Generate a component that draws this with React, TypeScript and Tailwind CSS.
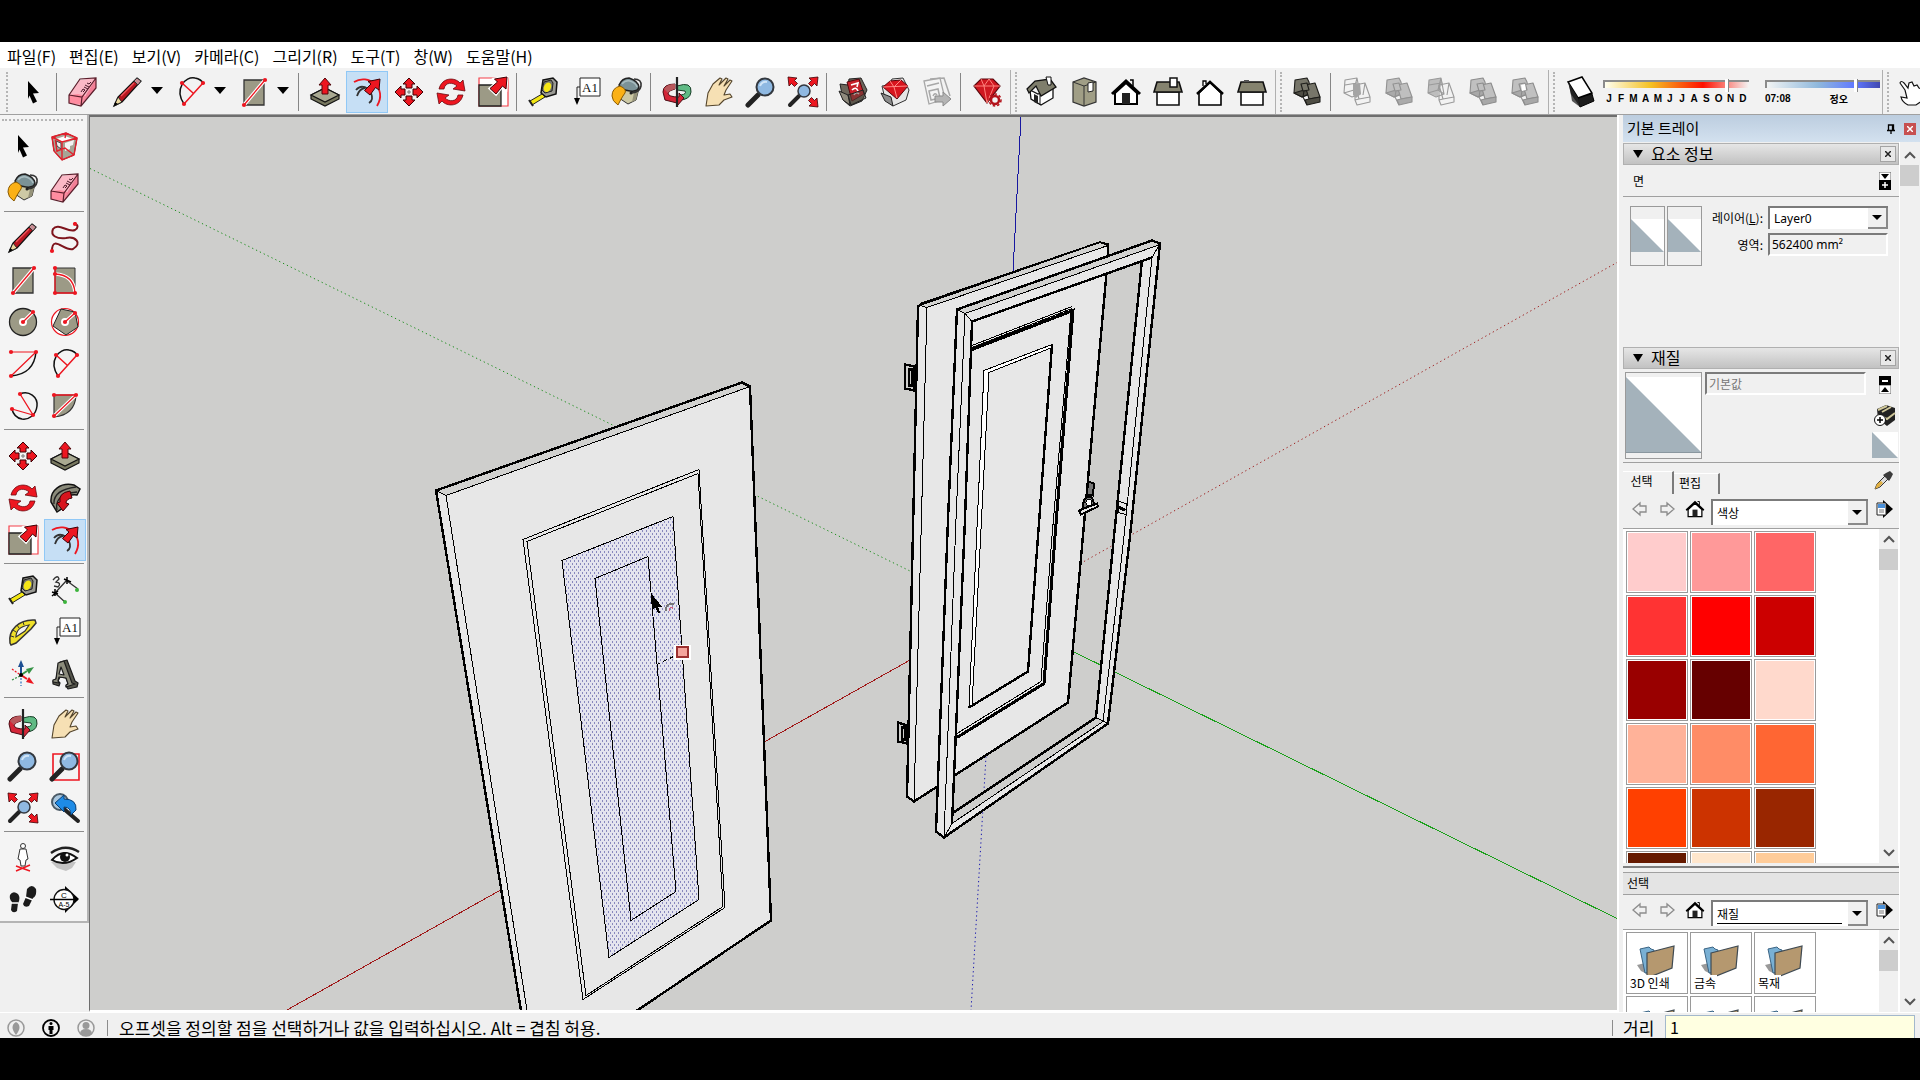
import type { ReactNode } from "react";

const RED = "#ed1620";
const STONE = "#9c9a86";

function Dots({ at }: { at: number[][] }) {
  return (
    <>
      {at.map(([x, y]) => (
        <circle key={`${x}-${y}`} cx={x} cy={y} r="2.1" fill={RED} />
      ))}
    </>
  );
}

const quarterTurns = [0, 90, 180, 270];
const bigArrow = "30,1 29,13 25.5,10 19,18 13,12.500 20.500,6 17.500,3";

const solidBoxes = (fill: string, side: string, stroke: string) => (
  <g fill={fill} stroke={stroke} strokeWidth="1.1" strokeLinejoin="round">
    <path d="M4 4l12-2 2 4 2 12-9 3-8-4z" />
    <path d="M3 17l10-3 7 3-9 4z" fill={side} />
    <path d="M14 9l10-2 5 14-11 2z" />
    <path d="M18 23l11-2v5l-13 3-2-5z" fill={side} />
    <path d="M14 9l-2 12 4 8" fill="none" />
    <path d="M10 8l6-1 2 7-6 1z" />
  </g>
);

const wireBoxes = (
  <g fill="none" stroke="#9a9a9a" strokeWidth="1.1" strokeLinejoin="round">
    <path d="M4 4l12-2 3 16-8 3-8-4zM3 17l10-3 6 4M13 14l3-12M4 9l12-2" />
    <path d="M14 9l10-2 5 14-11 2zM18 23l-4 1 2 5 13-3v-5M14 9v15M24 7l-2 12" />
  </g>
);

const houseIcon = (
  <g strokeLinejoin="miter">
    <path d="M5 17v11h22V17L16 7z" fill="#fff" stroke="#000" strokeWidth="2" />
    <path d="M2 18L16 5l14 13" fill="none" stroke="#000" strokeWidth="3" />
    <path d="M12 17h8v11h-8z" fill="#222" />
    <path d="M20 4h3v6" fill="none" stroke="#000" strokeWidth="1.5" />
  </g>
);

const lens = (
  <>
    <path d="M3 29l10-10" stroke="#222" strokeWidth="5" strokeLinecap="round" />
    <circle cx="20" cy="11" r="8.500" fill="#8fb9e2" stroke="#33383f" strokeWidth="2" />
    <path d="M15 10q2-5 7-4" fill="none" stroke="#cfe4f7" strokeWidth="2" />
  </>
);

const icons: Record<string, ReactNode> = {
  select: <path d="M11 5l11 12-6 .500 4 8-4 2-3.500-8L11 23z" fill="#000" />,
  component: (
    <>
      <path d="M3 7l14-4 11 5-3 17-12 5-8-9z" fill="#a5a596" stroke="#333" />
      <path d="M7 9l9-3 8 3-10 3z" fill="#fff" />
      <path d="M7 11l5 2v6l-4-3z" fill="#eee" stroke="#444" />
      <path d="M16 13l9-3-1 5-3 1v3l-5 2z" fill="#f4f4f4" />
      <path d="M3 7l14-4 11 5-3 17-12 5-8-9zM3 7l10 5 15-4M13 12v18M6 7l2 15M17 3l-1 5M8 21l8-3 9 7" fill="none" stroke="#e3202c" strokeWidth="1.400" />
    </>
  ),
  paint: (
    <>
      <path d="M13 11l15 1-3 12-8 4-9-6z" fill="#cdc9a5" stroke="#333" />
      <path d="M24 12l4 0-3 12-4 2z" fill="#96937a" />
      <path d="M8 9q3-7 10-7 9 3 10 9-1 5-9 4-9-1-11-6z" fill="#7b9297" stroke="#222" strokeWidth="1.500" />
      <path d="M11 8q3-4 8-3 6 2 7 6" fill="none" stroke="#a9bcc0" strokeWidth="1.500" />
      <path d="M23 3q8 0 7 7-1 6-9 7" fill="none" stroke="#333" strokeWidth="1.600" />
      <path d="M9 10q7 3 5 7c-3 4-5 8-7 12q-6-4-6-9 0-8 8-10z" fill="#fbb116" stroke="#8a5a00" />
      <circle cx="20" cy="17" r="1.500" fill="#222" />
    </>
  ),
  eraser: (
    <>
      <path d="M2 19l9-3 8 4-5 9-12-2z" fill="#ff8ca0" />
      <path d="M2 19L13 4l16-2-10 18-8-2z" fill="#fbb8c6" />
      <path d="M14 29l5-10L29 2v10z" fill="#f27f96" />
      <path d="M2 19L13 3l16-1v10L14 30 2 27zM2 19l13 2L29 2M15 21l-1 9" fill="none" stroke="#5a1d2a" strokeWidth="1.200" />
      <path d="M14 16l2-3 2 1-2 2M17 11l4 2M18 9l4 2M20 7l2 1 2-2" fill="none" stroke="#4a1a2a" strokeWidth="1" />
    </>
  ),
  pencil: (
    <>
      <path d="M2 30l4-9L25 2l4 3-19 21z" fill="#b81620" stroke="#111" strokeWidth="1.200" />
      <path d="M2 30l4-9 4 5z" fill="#ecd9a0" stroke="#222" />
      <path d="M2 30l1-4 3 2z" fill="#000" />
      <path d="M25 2l4 3-3 4-4-4z" fill="#c78e94" stroke="#333" />
      <path d="M9 20L22 7" stroke="#f0565c" strokeWidth="1.300" />
    </>
  ),
  freehand: (
    <>
      <path d="M3 29C3 12 16 30 24 27c10-6 2-13-7-11C8 17 1 14 4 7c5-7 15 4 22 1q5-3 0-7" fill="none" stroke="#7e141c" strokeWidth="2" />
      <Dots at={[[3, 29], [26, 2]]} />
    </>
  ),
  rect: (
    <>
      <path d="M6 4h20v25H6z" fill={STONE} stroke="#333" strokeWidth="1.300" />
      <path d="M6 29L27 4" stroke="#fff" strokeWidth="3.500" />
      <path d="M6 29L27 4" stroke={RED} strokeWidth="1.300" />
      <Dots at={[[6, 29], [27, 4]]} />
    </>
  ),
  rotRect: (
    <>
      <path d="M6 4h20v25H6z" fill={STONE} stroke="#333" />
      <path d="M6 10q19 1 20 19" fill="none" stroke="#fff" strokeWidth="3.500" />
      <path d="M6 4v25h20q-1-18-20-19" fill="none" stroke={RED} strokeWidth="1.300" />
      <Dots at={[[6, 4], [6, 10], [6, 29], [26, 29]]} />
    </>
  ),
  circle: (
    <>
      <circle cx="16" cy="16" r="13.500" fill={STONE} stroke="#222" strokeWidth="1.300" />
      <circle cx="16" cy="16" r="4" fill="#fff" />
      <path d="M16 16l10-10" stroke="#fff" strokeWidth="3.500" />
      <path d="M16 16l10-10" stroke={RED} strokeWidth="1.300" />
      <Dots at={[[16, 16], [26, 6]]} />
    </>
  ),
  polygon: (
    <>
      <circle cx="16" cy="16" r="13.500" fill="#fff" stroke={RED} strokeWidth="1.200" />
      <path d="M12 3l14 3 3 15-12 8-13-9z" fill={STONE} stroke="#222" />
      <circle cx="16" cy="16" r="4" fill="#fff" />
      <path d="M16 16l10-9" stroke="#fff" strokeWidth="3.500" />
      <path d="M16 16l10-9" stroke={RED} strokeWidth="1.300" />
      <Dots at={[[16, 16], [26, 7]]} />
    </>
  ),
  arc: (
    <>
      <path d="M4 28Q27 26 29 4" fill="none" stroke="#111" strokeWidth="1.500" />
      <path d="M4 4h25L4 28" fill="none" stroke={RED} strokeWidth="1.200" />
      <Dots at={[[4, 4], [29, 4], [4, 28]]} />
    </>
  ),
  arc2: (
    <>
      <path d="M9 28C-1 13 10 0 20 2q6 1 9 6" fill="none" stroke="#111" strokeWidth="1.500" />
      <path d="M9 28L28 7M7 7l11 10" stroke={RED} strokeWidth="1.500" />
      <Dots at={[[9, 28], [28, 7], [7, 7]]} />
    </>
  ),
  arc3: (
    <>
      <path d="M13 4C22 0 31 7 30 16 29 25 22 30 15 29 10 28 6 24 5 19" fill="none" stroke="#111" strokeWidth="1.500" />
      <path d="M13 4l13 21L5 19" fill="none" stroke={RED} strokeWidth="1.300" />
      <Dots at={[[13, 4], [26, 25], [5, 19]]} />
    </>
  ),
  pie: (
    <>
      <path d="M5 5h22q-1 20-22 22z" fill={STONE} stroke="#333" strokeWidth="1.200" />
      <path d="M5 26L27 5" stroke="#fff" strokeWidth="3.500" />
      <path d="M5 5h22L5 26" fill="none" stroke={RED} strokeWidth="1.300" />
      <Dots at={[[5, 5], [27, 5], [5, 26]]} />
    </>
  ),
  move: (
    <>
      {quarterTurns.map((a) => (
        <path key={a} d="M16 2l6 6h-3v4h-6V8h-3z" transform={`rotate(${a} 16 16)`} fill={RED} stroke="#3c0004" />
      ))}
      <path d="M14 16h4M16 14v4" stroke="#777" />
    </>
  ),
  pushpull: (
    <>
      <path d="M2 19l14-7 14 7v4l-14 7-14-7z" fill="#77775f" stroke="#111" strokeWidth="1.200" />
      <path d="M2 19l14-7 14 7-14 7z" fill="#a9a992" stroke="#111" strokeWidth="1.200" />
      <path d="M16 2l6 7h-3v9h-6V9h-3z" fill={RED} stroke="#50060a" />
    </>
  ),
  rotate: (
    <g fill={RED} stroke="#6a0a10" strokeWidth=".800">
      <path d="M4 13C7 1 20 1 25 7l3-3 2 11-12-2 4-3C18 6 10 6 9 13z" />
      <path d="M28 19C25 31 12 31 7 25l-3 3-2-11 12 2-4 3c4 4 12 4 13-3z" />
    </g>
  ),
  followMe: (
    <>
      <path d="M25 3C12 0 1 8 2 20l6 10 6-4q-2-5 1-9 5-5 13-4l3-6z" fill="#8a8a7a" stroke="#111" strokeWidth="1.500" />
      <path d="M5 22Q4 8 27 5M8 28q-3-16 20-18" fill="none" stroke="#222" strokeWidth="1.300" />
      <path d="M21 9q-12 2-10 11l-3 1 6 8 6-7-3-1q0-4 6-5z" fill="#d8141d" stroke="#3c0004" />
    </>
  ),
  scale: (
    <>
      <path d="M2 2h29v28H2z" fill="#fff" stroke="#f3404a" strokeWidth="1.200" />
      <path d="M2 9h22v21H2z" fill={STONE} stroke="#222" strokeWidth="1.300" />
      <polygon points={bigArrow} fill={RED} stroke="#fff" strokeWidth="3" />
      <polygon points={bigArrow} fill={RED} stroke="#3c0004" />
    </>
  ),
  offset: (
    <>
      <path d="M3 6C17-3 37 12 26 30" fill="none" stroke={RED} strokeWidth="1.800" />
      <path d="M5 14q5-6 12-1M14 12q-6 1-8 8M20 17q3 7-2 10" fill="none" stroke="#333" strokeWidth="1.800" />
      <polygon points="29,3 28,14 24.500,11.500 19,19 13.500,14.500 20,8 17,5.500" fill={RED} stroke="#3c0004" />
    </>
  ),
  tape: (
    <>
      <path d="M16 4l10-2 4 4-1 12-10 3-5-4z" fill="#9a9a94" stroke="#111" strokeWidth="1.500" />
      <path d="M17 6l7-2 2 3-1 8-7 2-3-3z" fill="#77776f" stroke="#222" />
      <ellipse cx="20.500" cy="11" rx="3.500" ry="5" fill="#f5e616" transform="rotate(25 20 11)" />
      <path d="M15 18L3 25l2 4 13-8z" fill="#f2e613" stroke="#222" />
      <path d="M2 24l4 6" stroke="#222" strokeWidth="2" />
    </>
  ),
  dimension: (
    <>
      <path d="M6 19L18 6M6 19l10 9M18 7l11 8" stroke="#333" strokeWidth="1.300" />
      <path d="M3 18l6 2M6 15v7M15 5l7 3M18 3v7M3 22l6-5" stroke="#000" strokeWidth="1.500" />
      <path d="M4 6q5-6 6-1l-3 3q6 1 2 5l-4-1" fill="none" stroke="#333" strokeWidth="1.300" />
      <circle cx="16" cy="28" r="2" fill="#3cb43c" />
      <circle cx="28" cy="16" r="2" fill="#3cb43c" />
    </>
  ),
  protractor: (
    <>
      <path d="M4 29l-1-2C1 14 12 3 28 4l1 3-5 6L9 27z" fill="#efe02a" stroke="#333" strokeWidth="1.500" />
      <path d="M9 21q0-10 13-12l-4 6z" fill="#f2f2f2" stroke="#333" strokeWidth="1.200" />
      <path d="M4 20l3 1M6 14l3 2M10 9l2 3M16 6l1 3" stroke="#333" />
    </>
  ),
  text: (
    <>
      <path d="M11 2h20v18H11z" fill="#fff" stroke="#222" />
      <path d="M11 11H8v12" fill="none" stroke="#222" />
      <path d="M5 22h6l-3 7z" fill="#000" />
      <text x="21" y="16" textAnchor="middle" fontSize="13" fontFamily="Liberation Serif, serif" fill="#111">A1</text>
    </>
  ),
  axes: (
    <>
      <path d="M14 17V9" stroke="#1d4f93" strokeWidth="2" />
      <path d="M14 2l3 7h-6z" fill="#1d4f93" />
      <path d="M14 20v8" stroke="#3678c0" strokeWidth="1.300" strokeDasharray="2 1.500" />
      <path d="M14 17l6-4" stroke="#369447" strokeWidth="2" />
      <path d="M27 9l-5 7-3-5z" fill="#369447" />
      <path d="M5 22l8-4" stroke="#369447" strokeWidth="1.300" strokeDasharray="2 1.500" />
      <path d="M14 17l6 4" stroke={RED} strokeWidth="2" />
      <path d="M27 26l-5-7-3 5z" fill={RED} />
      <path d="M5 11l7 5" stroke={RED} strokeWidth="1.300" strokeDasharray="2 1.500" />
      <circle cx="14" cy="17" r="2" fill="#000" />
    </>
  ),
  text3d: (
    <g stroke="#1c1c1c" strokeWidth="1.200" strokeLinejoin="round">
      <path d="M11 4l7-2 8 21 3 2-1 4-9 2-2-3 2-3-2-5-6-1-2 4 2 2-1 3-6-2v-3l3-2z" fill="#55554b" />
      <path d="M9 5l6-2 8 22 3 1-9 3v-2l2-1-2-6-7-1-1 4 1 2-6-1v-2l3-1z" fill="#8c8c7c" />
      <path d="M12 9l-2 7 5 1z" fill="#f2f2f2" />
    </g>
  ),
  orbit: (
    <>
      <path d="M16 10q15-5 14 6-1 8-12 8l2-5q6-1 4-4l-8-1z" fill="#5fba84" stroke="#173d26" />
      <path d="M14 8Q2 8 2 16l2 8 12 3v3l7-8-5-5v4q-11 0-11-4 2-3 7-4z" fill="#d42537" stroke="#4a0a12" />
      <path d="M3 13q3-5 11-5v5q-5 1-7 4z" fill="#b9585c" />
      <path d="M16 1v30" stroke="#222" strokeWidth="2.200" />
    </>
  ),
  hand: (
    <path d="M3 30l2-13 5-9 7-6 2 1-3 6 7-7 2 1-4 7 6-6 2 1-6 9-2 5 6-1 2 3-8 3-5 5z" fill="#f6e0b4" stroke="#54452c" strokeWidth="1.100" strokeLinejoin="round" />
  ),
  zoom: lens,
  zoomWindow: (
    <>
      <path d="M4 4h26v26H4z" fill="none" stroke={RED} strokeWidth="1.600" />
      {lens}
    </>
  ),
  zoomExtents: (
    <>
      <path d="M3 29l9-9" stroke="#222" strokeWidth="4" strokeLinecap="round" />
      <circle cx="17" cy="15" r="6" fill="#8fb9e2" stroke="#33383f" strokeWidth="1.500" />
      {["", "translate(32 0) scale(-1 1)", "translate(32 32) scale(-1 -1)"].map((t) => (
        <path key={t} d="M1 1l9 1-2.500 2.500 3 3-3 3-3-3L2 10z" transform={t} fill={RED} stroke="#3c0004" strokeWidth=".800" />
      ))}
    </>
  ),
  previous: (
    <>
      <circle cx="11" cy="10" r="8" fill="#a9c6dd" stroke="#4b5a66" strokeWidth="2" />
      <path d="M15 17l14 12" stroke="#222" strokeWidth="4" strokeLinecap="round" />
      <path d="M6 11l9-8v4q13 0 12 11l-5 5q0-8-7-8v5z" fill="#1e8be6" stroke="#0b3f74" />
    </>
  ),
  walk: (
    <>
      <circle cx="16" cy="4" r="2.500" fill="#fff" stroke="#333" />
      <path d="M13 7h6l2 10-2 1-1 6h-4l-1-6-2-1z" fill="#fff" stroke="#333" />
      <path d="M9 29l14-6M9 24l14 5" stroke={RED} strokeWidth="1.500" />
    </>
  ),
  eye: (
    <>
      <path d="M2 20l6 6 9 3 6-3 4-6z" fill="#c4c4c4" />
      <path d="M2 11Q16 1 30 10" fill="none" stroke="#222" strokeWidth="2.500" />
      <path d="M3 18Q14 5 28 16q-13 9-25 2z" fill="#fff" stroke="#111" strokeWidth="2" />
      <circle cx="16" cy="15" r="5" fill="#111" />
      <circle cx="18" cy="13" r="1.500" fill="#fff" />
    </>
  ),
  steps: (
    <>
      <path d="M3 11q3-5 8-1 3 4 0 9l-1 8q-4 3-6-1l1-8q-3-3-2-7z" fill="#1b1b1b" />
      <path d="M20 5q5-6 9 0 1 7-3 9l-4 8q-5 2-6-2l3-7z" fill="#1b1b1b" />
      <path d="M4 19h7M18 13l8 3" stroke="#fff" strokeWidth="1.500" />
    </>
  ),
  section: (
    <>
      <path d="M16 2l14 13-14 14z" fill="#000" />
      <circle cx="15" cy="15.500" r="10" fill="#fff" stroke="#111" strokeWidth="1.300" />
      <path d="M1 15.500h28" stroke="#000" strokeWidth="1.500" />
      <text x="15" y="14" textAnchor="middle" fontSize="8" fontFamily="Liberation Sans, sans-serif">C</text>
      <text x="15" y="23" textAnchor="middle" fontSize="7" fontFamily="Liberation Sans, sans-serif">A-5</text>
    </>
  ),
  warehouse: (
    <>
      <path d="M3 8l8 1 1-6 12-1 6 12-5 11-12 5-7-6z" fill="#6d665b" stroke="#222" />
      <path d="M10 6l12-3 5 15-12 7z" fill="#c71f29" stroke="#51090e" />
      <path d="M14 9l7-2-1 4M15 14q4-4 6 1M17 19q2-4 5-1" fill="none" stroke="#fff" strokeWidth="1.600" />
      <path d="M2 15l9 4 2 10-7-5z" fill="#8f8a7d" stroke="#222" />
      <path d="M11 19l15-5 3 8-15 7z" fill="#4d473d" stroke="#222" fillOpacity=".500" />
    </>
  ),
  extWarehouse: (
    <>
      <path d="M3 10l7-1 3-6 11-1 6 12-3 10-13 6-8-7z" fill="#e6e6e6" stroke="#333" />
      <path d="M2 17l10 4 2 9-8-5z" fill="#8c8c8c" stroke="#222" />
      <path d="M4 11l7-6 11-1 7 6-11 13z" fill="#d8141d" stroke="#5a070c" />
      <path d="M4 11l25-1M11 5l4 6 7-7M15 11l3 11" fill="none" stroke="#ff8a85" />
    </>
  ),
  layout: (
    <>
      <path d="M3 5l16-3 5 21-16 5z" fill="#f4f4f4" stroke="#a8a8a8" strokeWidth="1.300" />
      <path d="M9 3l14-1 6 18M6 10l12-3M8 15l9-2 2 9-9 2zM12 20q2-4 4-1" fill="none" stroke="#a8a8a8" strokeWidth="1.500" />
      <path d="M14 20h8v-4l8 7-8 7v-4h-8z" fill="#b4b4b4" stroke="#8a8a8a" />
    </>
  ),
  ruby: (
    <>
      <path d="M3 10l7-7h12l7 7-13 17z" fill="#cf1820" stroke="#5a070c" strokeWidth="1.200" />
      <path d="M3 10h26M10 3l3 7 5-7 5 7 M13 10l3 17 7-17" fill="none" stroke="#ff827c" />
      <circle cx="24" cy="24" r="4" fill="#f2f2f2" stroke="#b3121a" strokeWidth="2.500" />
      <circle cx="24" cy="24" r="6" fill="none" stroke="#b3121a" strokeWidth="1.500" strokeDasharray="2.500 2" />
    </>
  ),
  viewIso: (
    <>
      <path d="M4 14l8 4 15-6v10l-12 7-10-6z" fill="#fff" stroke="#111" strokeWidth="1.300" />
      <path d="M14 18v11" stroke="#111" />
      <path d="M1 13L9 5l15-2 6 8-15 9-5-10-7 7z" fill="#7f7e6c" stroke="#111" strokeWidth="1.300" />
      <path d="M8 18l4 2v8l-4-2z" fill="#222" />
      <path d="M20 1h5v8h-3z" fill="#fff" stroke="#111" />
    </>
  ),
  viewTop: (
    <>
      <path d="M5 6l11-4 12 4v20l-12 4-11-4z" fill="#a09e86" stroke="#333" strokeWidth="1.200" />
      <path d="M5 6l11 4 12-4M16 10v20" fill="none" stroke="#333" />
      <path d="M20 7l5-1v9l-5 1z" fill="#fff" stroke="#222" />
    </>
  ),
  viewFront: houseIcon,
  viewRight: (
    <>
      <path d="M5 16h22v13H5z" fill="#fff" stroke="#111" strokeWidth="1.600" />
      <path d="M5 6h22l3 10H2z" fill="#85836f" stroke="#111" strokeWidth="1.600" />
      <path d="M18 2h7v9h-7z" fill="#fff" stroke="#111" strokeWidth="1.500" />
    </>
  ),
  viewBack: (
    <>
      <path d="M5 17v12h22V17L16 6z" fill="#fff" stroke="#000" strokeWidth="1.600" />
      <path d="M3 18L16 6l13 12" fill="none" stroke="#000" strokeWidth="2.500" />
      <path d="M9 10V5h3v3" fill="#fff" stroke="#000" strokeWidth="1.300" />
    </>
  ),
  viewLeft: (
    <>
      <path d="M5 16h22v13H5z" fill="#fff" stroke="#111" strokeWidth="1.600" />
      <path d="M5 6h22l3 10H2z" fill="#85836f" stroke="#111" strokeWidth="1.600" />
      <path d="M8 4h5v2H8z" fill="#555" />
    </>
  ),
  outerShell: solidBoxes("#77766a", "#4e4d44", "#1d1d1a"),
  intersect: (
    <>
      {wireBoxes}
      <path d="M12 8l7-1 1 11-5 4-3-3z" fill="#a4a4a4" />
    </>
  ),
  union: solidBoxes("#bfbfbf", "#aaaaaa", "#929292"),
  subtract: (
    <>
      <path d="M4 4l12-2 2 6-5 6 0 7-10-4z" fill="#bdbdbd" />
      {wireBoxes}
    </>
  ),
  trim: solidBoxes("#c0c0c0", "#a8a8a8", "#8d8d8d"),
  split: (
    <>
      {solidBoxes("#c0c0c0", "#a8a8a8", "#8d8d8d")}
      <path d="M12 9l4-1 1 6-4 1z" fill="#fff" />
    </>
  ),
  shadow: (
    <>
      <path d="M5 8l8 13 3 10-8-6z" fill="#555" />
      <path d="M13 21l15-3 2 7-14 6z" fill="#1c1c1c" stroke="#000" />
      <path d="M4 6l14-5 10 16-14 5z" fill="#fff" stroke="#000" strokeWidth="1.500" />
      <path d="M4 6l10 16 2 9L7 18z" fill="#222" />
    </>
  ),
  home: houseIcon,
};

function Icon({ name, className = "size-8" }: { name: string; className?: string }) {
  return (
    <svg viewBox="0 0 32 32" className={`${className} shrink-0`} fill="#000" aria-hidden="true">
      {icons[name]}
    </svg>
  );
}

function ToolButton({ name, active }: { name: string; active?: boolean }) {
  return (
    <button
      type="button"
      aria-label={name}
      className={`flex h-[42px] w-[42px] shrink-0 items-center justify-center border ${
        active ? "border-[#90c8f6] bg-[#c6dff5]" : "border-transparent"
      }`}
    >
      <Icon name={name} />
    </button>
  );
}

function ToolWithMenu({ name }: { name: string }) {
  return (
    <div className="mr-[5px] flex items-center">
      <ToolButton name={name} />
      <button type="button" aria-label={`${name} menu`} className="flex h-[42px] w-4 items-center justify-center">
        <svg viewBox="0 0 12 7" className="mb-1 h-[7px] w-3">
          <path d="M0 0h12L6 7z" />
        </svg>
      </button>
    </div>
  );
}

function Divider() {
  return <div className="ml-0.5 mr-[5px] h-[38px] w-px shrink-0 bg-[#868686]" />;
}

function BarEnd() {
  return <div className="ml-0.5 h-full w-px shrink-0 bg-[#b0b0b0]" />;
}

function Grip() {
  return <div className="mx-1 h-10 shrink-0 border-l-2 border-dotted border-[#b5b5b5]" />;
}

function Tools({ names }: { names: string[] }) {
  return (
    <>
      {names.map((name) => (
        <ToolButton key={name} name={name} active={name === "offset"} />
      ))}
    </>
  );
}

const menus = ["파일(F)", "편집(E)", "보기(V)", "카메라(C)", "그리기(R)", "도구(T)", "창(W)", "도움말(H)"];
const months = ["J", "F", "M", "A", "M", "J", "J", "A", "S", "O", "N", "D"];

const rangeClass =
  "block h-2 w-full appearance-none border-l-2 border-t-2 border-[#8b8b8b] [&::-webkit-slider-thumb]:h-[13px] [&::-webkit-slider-thumb]:w-1 [&::-webkit-slider-thumb]:appearance-none [&::-webkit-slider-thumb]:border-r [&::-webkit-slider-thumb]:border-[#888] [&::-webkit-slider-thumb]:bg-white";

function TopToolbar() {
  return (
    <div className="flex h-[47px] items-center overflow-hidden border-b border-[#a0a0a0] bg-[#f2f2f2] pl-0.5 pt-0.5">
      <Grip />
      <ToolButton name="select" />
      <Divider />
      <div className="mr-[3px]">
        <ToolButton name="eraser" />
      </div>
      <ToolWithMenu name="pencil" />
      <ToolWithMenu name="arc2" />
      <ToolWithMenu name="rect" />
      <Divider />
      <Tools names={["pushpull", "offset", "move", "rotate", "scale"]} />
      <Divider />
      <Tools names={["tape", "text", "paint"]} />
      <Divider />
      <Tools names={["orbit", "hand", "zoom", "zoomExtents"]} />
      <Divider />
      <Tools names={["warehouse", "extWarehouse", "layout"]} />
      <Divider />
      <Tools names={["ruby"]} />
      <BarEnd />
      <Grip />
      <Tools names={["viewIso", "viewTop", "viewFront", "viewRight", "viewBack", "viewLeft"]} />
      <BarEnd />
      <Grip />
      <Tools names={["outerShell"]} />
      <Divider />
      <Tools names={["intersect", "union", "subtract", "trim", "split"]} />
      <BarEnd />
      <Grip />
      <ToolButton name="shadow" />
      <div className="ml-0.5 w-[146px] shrink-0 font-['Liberation_Sans',sans-serif] text-[10px] font-bold leading-none">
        <input
          type="range"
          aria-label="월"
          defaultValue={86}
          className={`${rangeClass} bg-[linear-gradient(to_right,#fffff0,#f4c020_32%,#ff1000_68%,#f4f4f4)]`}
        />
        <div className="mt-1.5 flex justify-between px-0.5">
          {months.map((m, i) => (
            <span key={i} className="w-2 text-center">
              {m}
            </span>
          ))}
        </div>
      </div>
      <div className="ml-4 w-[115px] shrink-0 text-[10px] leading-none">
        <input
          type="range"
          aria-label="시간"
          defaultValue={80}
          className={`${rangeClass} bg-[linear-gradient(to_right,#f2f4f4,#8fb8dc_45%,#6078ff_78%,#4048b0)]`}
        />
        <div className="mt-1.5 flex justify-between pr-8 font-bold">
          <span className="font-['Liberation_Sans',sans-serif]">07:08</span>
          <span>정오</span>
        </div>
      </div>
      <BarEnd />
      <Grip />
      <svg viewBox="0 0 24 28" className="ml-1.5 h-7 w-6 shrink-0" fill="#fff" stroke="#111" strokeWidth="1.200">
        <path d="M6 12L1 5q1-3 4 0l4 5 1-5 3-1 2 4 3-1 2 3 3 1v12l-6 4H9q-6-3-7-8l6 1z" />
      </svg>
    </div>
  );
}

const paletteGroups = [
  ["select", "component", "paint", "eraser"],
  ["pencil", "freehand", "rect", "rotRect", "circle", "polygon", "arc", "arc2", "arc3", "pie"],
  ["move", "pushpull", "rotate", "followMe", "scale", "offset"],
  ["tape", "dimension", "protractor", "text", "axes", "text3d"],
  ["orbit", "hand", "zoom", "zoomWindow", "zoomExtents", "previous"],
  ["walk", "eye", "steps", "section"],
];

function Palette() {
  return (
    <aside className="w-[89px] shrink-0 bg-[#f0f0f0]">
      <div className="border-b-2 border-r-2 border-[#b4b4b4] bg-[#f4f4f4] pl-0.5 pt-1">
        <div className="mb-1 mr-1 border-t-2 border-dotted border-[#b5b5b5]" />
        {paletteGroups.map((group, i) => (
          <div key={i}>
            {i > 0 && <div className="mb-[5px] ml-0.5 mr-[3px] mt-0.5 h-px bg-[#8c8c8c]" />}
            <div className="grid w-[84px] grid-cols-2">
              <Tools names={group} />
            </div>
          </div>
        ))}
      </div>
    </aside>
  );
}

function Viewport() {
  return (
    <main className="min-w-0 flex-1 border-b-2 border-l border-t-2 border-[#6e6e6e] border-b-white bg-[#cececc]">
      <svg
        viewBox="90 117 1527 894"
        preserveAspectRatio="xMidYMid slice"
        className="size-full"
        fill="none"
        stroke="#000"
        strokeWidth="1"
        shapeRendering="crispEdges"
      >
        <defs>
          <pattern id="selected" width="4" height="6" patternUnits="userSpaceOnUse">
            <rect width="4" height="6" fill="#e4e4ee" stroke="none" />
            <rect width="1" height="1" fill="#2c2c8c" stroke="none" />
            <rect x="2" y="3" width="1" height="1" fill="#2c2c8c" stroke="none" />
          </pattern>
        </defs>

        {/* axes */}
        <path d="M1073 652L1617 919" stroke="#1ba01b" />
        <path d="M286 1011L911 660" stroke="#a01818" />
        <path d="M1021 117L1013 272" stroke="#1818a0" />
        <g shapeRendering="auto" strokeDasharray="1.300 3">
          <path d="M90 169L911 572" stroke="#1f8f1f" />
          <path d="M1084 562L1617 263" stroke="#a02020" />
          <path d="M986 757L971 1011" stroke="#1818b0" />
        </g>

        {/* front door */}
        <path d="M436 491L742 383 750 387 771 921 637 1011H521z" fill="#e7e7e7" stroke="none" />
        <path d="M436 491L742 383 750 387 446 496z" fill="#d2d2d0" stroke="none" />
        <path d="M527 1011L446 496 750 387M446 496l-10-5" />
        <path d="M521 1011L436 491 742 383 750 387 771 921 637 1011" strokeWidth="2.400" />
        <path d="M523 540L699 470 725 908 583 1000z" />
        <path d="M527 542L698 474 723 907 586 996z" />
        <path d="M562 561L673 517 699 900 609 958z" fill="url(#selected)" />
        <path d="M595 579L648 557 676 892 631 921z" />
        <path d="M657 665l25-12" strokeDasharray="4 3" />
        <rect x="674" y="645" width="17" height="15" fill="#fff" stroke="none" />
        <rect x="677" y="647" width="11" height="10" fill="#f4a49c" stroke="#9c3030" strokeWidth="2" />

        {/* hinges */}
        <path d="M905 365l9 2v24l-9-2zM909 370h3v16h-3z" strokeWidth="2.400" />
        <path d="M898 723l9 3v18l-9-2zM902 728h3v12h-3z" strokeWidth="2.400" />

        {/* door slab */}
        <path d="M918 307L922 304 1100 243 1108 245V257L1068 703 914 802 907 797z" fill="#e7e7e7" strokeWidth="2.400" />
        <path d="M920 306L1100 243 1108 246 927 308z" fill="#d2d2d0" />
        <path d="M927 308L914 802" />
        <path d="M972 346L1072 307M972 348L1072 309" />
        <path d="M972 350L1073 311 1055 537 1044 684 957 738" strokeWidth="3" />
        <path d="M1071 312L1052 537 1041 682 957 734" />
        <path d="M984 371L1052 345V348L989 373 972 706 969 708z" fill="#fff" />
        <path d="M1052 345L1038 537 1028 672 969 708" strokeWidth="2.400" />

        {/* handle */}
        <path d="M1088 482l6 2-1 12-6-1zM1083 508q0-11 7-11 4 2 4 10" fill="#777" strokeWidth="2" />
        <path d="M1079 511l18-7 1 3-17 8z" fill="#e7e7e7" strokeWidth="2" />
        <circle cx="1089" cy="503" r="3" fill="#fff" />

        {/* frame */}
        <path
          d="M957 310L1152 241 1160 244 1130 537 1108 724 944 838 936 832 948 520zM972 322L965 520 952 824 1096 718 1114 537 1142 261z"
          fill="#e7e7e7"
          fillRule="evenodd"
          stroke="none"
        />
        <path d="M957 310L1152 241 1160 245 965 314z" fill="#d2d2d0" stroke="none" />
        <path d="M952 814L1096 718 1103 722 952 824z" fill="#cfcfcd" stroke="none" />
        <path d="M957 310L965 314 1160 245M965 314L956 520 944 838M965 314l7 8M1159 246l-7 12M1152 258L1124 537 1103 722 952 824 944 838M1096 718l12 6" />
        <path d="M957 310L1152 241 1160 244 1130 537 1108 724 944 838 936 832 948 520z" strokeWidth="2.400" />
        <path d="M952 824L965 520 972 322 1152 258M1142 261L1114 537 1096 718 952 814" strokeWidth="2.400" />
        <path d="M1119 502l7 2v11l-8-2zM1119 508l6 2" strokeWidth="1" />
        <path d="M1118 507l7 4" strokeWidth="3" />

        {/* pointer */}
        <path d="M652 595v16l3-3 3 6 2-1-2-6h4z" fill="#000" stroke="none" />
        <path d="M666 611q0-8 8-6" stroke="#777" strokeWidth="2" />
        <path d="M669 611q1-5 4-2" stroke="#d06080" />
      </svg>
    </main>
  );
}

function Diagonal({ className }: { className: string }) {
  return (
    <svg viewBox="0 0 10 10" preserveAspectRatio="none" className={className}>
      <path d="M0 0h10v10H0z" fill="#fff" />
      <path d="M0 0l10 10H0z" fill="#a4b2bb" />
    </svg>
  );
}

function Chevron({ down }: { down?: boolean }) {
  return (
    <button type="button" aria-label={down ? "아래로" : "위로"} className="flex h-5 w-full items-center justify-center">
      <svg viewBox="0 0 12 8" className="h-2 w-3" fill="none" stroke="#555" strokeWidth="2">
        <path d={down ? "M1 1l5 5 5-5" : "M1 7l5-5 5 5"} />
      </svg>
    </button>
  );
}

function SectionHeader({ title }: { title: string }) {
  return (
    <div className="flex h-[22px] shrink-0 items-center border border-[#b0b0b0] bg-linear-to-b from-[#e6e6e6] to-[#c2c2c2] pl-[9px] pr-0.5">
      <svg viewBox="0 0 10 8" className="h-2 w-[10px]">
        <path d="M0 0h10L5 8z" />
      </svg>
      <h2 className="mb-0.5 ml-2 flex-1 text-base leading-5">{title}</h2>
      <button
        type="button"
        aria-label="닫기"
        className="flex size-4 items-center justify-center border border-[#a4a4a4] bg-[#e8e8e8]"
      >
        <svg viewBox="0 0 6 6" className="size-[6px]" stroke="#222" strokeWidth="1.500">
          <path d="M0 0l6 6M6 0L0 6" />
        </svg>
      </button>
    </div>
  );
}

function Dropdown({ label, value, className, id }: { label?: string; value: string; className: string; id: string }) {
  return (
    <div className={`relative border-l-2 border-t-2 border-[#7b7b7b] bg-white ${className}`}>
      <select id={id} aria-label={label} className="size-full appearance-none bg-transparent pl-1 outline-none">
        <option>{value}</option>
      </select>
      <div className="pointer-events-none absolute inset-y-0 right-0 flex w-5 items-center justify-center border-b-2 border-r-2 border-[#8a8a8a] bg-[#f0f0f0]">
        <svg viewBox="0 0 10 5" className="h-[5px] w-[10px]">
          <path d="M0 0h10L5 5z" />
        </svg>
      </div>
    </div>
  );
}

function NavRow({ id, value, underline }: { id: string; value: string; underline?: boolean }) {
  return (
    <div className="flex h-[35px] shrink-0 items-center border-b border-[#a0a0a0] pl-2">
      {["M1 8l7-6v3h6v6H8v3z", "M15 8L8 2v3H2v6h6v3z"].map((d, i) => (
        <button key={d} type="button" aria-label={i ? "앞으로" : "뒤로"} className="mb-1 mr-[9px] flex h-5 w-[18px] items-center justify-center">
          <svg viewBox="0 0 16 16" className="size-4" fill="none" stroke="#8c8c8c" strokeWidth="1.300">
            <path d={d} />
          </svg>
        </button>
      ))}
      <button type="button" aria-label="홈" className="mb-1 mr-1.5">
        <Icon name="home" className="size-5" />
      </button>
      <div className="relative mt-0.5 w-[157px]">
        <Dropdown id={id} label={value} value={value} className="h-[26px]" />
        {underline && <div className="absolute bottom-0.5 left-1.5 right-[26px] h-px bg-black" />}
      </div>
      <button type="button" aria-label="세부 정보" className="mb-1 ml-2">
        <svg viewBox="0 0 18 18" className="size-[18px]">
          <path d="M7 0l10 9L7 18z" />
          <path d="M1 3h9v12H1z" fill="#fff" stroke="#222" />
          <path d="M2 4h7v4H2z" fill="#4a90d9" />
          <path d="M3 10h5M3 12h5" stroke="#777" />
        </svg>
      </button>
    </div>
  );
}

const swatches = [
  "#ffcccc", "#ff9999", "#ff6666",
  "#ff3333", "#ff0000", "#cc0000",
  "#990000", "#660000", "#ffd9cc",
  "#ffb299", "#ff8c66", "#ff6633",
  "#ff4000", "#cc3300", "#992600",
  "#661a00", "#ffe6cc", "#ffcc99",
];

const folders = ["3D 인쇄", "금속", "목재", "", "", ""];

function Folder() {
  return (
    <svg viewBox="0 0 40 34" className="absolute left-2.5 top-3 h-[34px] w-10">
      <path d="M0 20l8-2 4 12-8-4z" fill="#999" />
      <path d="M3 4l9-2 2 2 3 1v22l-9 1z" fill="#79b0d4" stroke="#3b6484" />
      <path d="M10 8L37 1l-2 22-25 10z" fill="#b5986f" stroke="#3f4a52" strokeWidth="1.200" />
    </svg>
  );
}

function ScrollColumn() {
  return (
    <div className="flex w-[19px] shrink-0 flex-col bg-[#f0f0f0]">
      <Chevron />
      <div className="h-[21px] bg-[#cdcdcd]" />
    </div>
  );
}

function Tray() {
  return (
    <aside className="flex w-[303px] shrink-0 flex-col border-l-2 border-white bg-[#f0f0f0] pl-1 text-xs">
      <div className="flex h-[27px] shrink-0 items-center bg-linear-to-b from-[#bccddf] to-[#d3e1ef] pl-1 pr-1">
        <h1 className="mb-0.5 flex-1 text-[15px]">기본 트레이</h1>
        <button type="button" aria-label="고정" className="mr-[9px]">
          <svg viewBox="0 0 8 10" className="h-[10px] w-2" fill="none" stroke="#000" strokeWidth="1.300">
            <path d="M1.500 6V1h5v5M0 6.500h8M4 7v3M5.500 1v5" />
          </svg>
        </button>
        <button type="button" aria-label="트레이 닫기" className="flex size-3 items-center justify-center bg-[#c75050]">
          <svg viewBox="0 0 6 6" className="size-[6px]" stroke="#fff" strokeWidth="1.500">
            <path d="M0 0l6 6M6 0L0 6" />
          </svg>
        </button>
      </div>

      <div className="flex min-h-0 flex-1">
        <div className="flex min-w-0 flex-1 flex-col pt-px">
          <SectionHeader title="요소 정보" />
          <div className="h-[182px] shrink-0">
            <div className="flex h-8 items-center justify-between border-b border-[#a0a0a0] pl-[10px] pr-2">
              <span>면</span>
              <svg viewBox="0 0 12 18" className="h-[18px] w-3">
                <path d="M0 0h12v9H0z" fill="#fff" stroke="#666" />
                <path d="M2 2h8L6 7z" />
                <path d="M0 8h12v10H0z" />
                <path d="M6 10v6M3 13h6" stroke="#fff" strokeWidth="1.500" />
              </svg>
            </div>
            <div className="flex pl-[7px] pr-[11px] pt-[9px]">
              {[0, 1].map((k) => (
                <div key={k} className="mr-0.5 h-[60px] w-[35px] border border-[#9a9a9a] pt-3">
                  <Diagonal className="h-[33px] w-full" />
                </div>
              ))}
              <div className="grid flex-1 grid-cols-[auto_120px] content-start items-center justify-end gap-x-[5px] gap-y-1">
                <label htmlFor="layer" className="text-right">
                  레이어(<u>L</u>):
                </label>
                <Dropdown id="layer" value="Layer0" className="h-[23px] font-['Noto_Sans',sans-serif]" />
                <label htmlFor="area" className="text-right">
                  영역:
                </label>
                <input
                  id="area"
                  readOnly
                  defaultValue="562400 mm²"
                  className="h-[23px] min-w-0 border-2 border-b-white border-l-[#7b7b7b] border-r-white border-t-[#7b7b7b] bg-[#f0f0f0] pl-0.5 font-['Noto_Sans',sans-serif]"
                />
              </div>
            </div>
          </div>

          <SectionHeader title="재질" />
          <div className="flex h-[94px] shrink-0 border-b border-[#a0a0a0] pl-0.5 pt-[3px]">
            <div className="h-[87px] w-[77px] border border-[#9a9a9a] pt-1">
              <Diagonal className="h-[76px] w-full border-b border-[#8a979f]" />
            </div>
            <input
              aria-label="재질 이름"
              readOnly
              defaultValue="기본값"
              className="ml-[3px] h-[23px] min-w-0 flex-1 border-2 border-b-white border-l-[#7b7b7b] border-r-white border-t-[#7b7b7b] bg-[#f0f0f0] pl-0.5 text-[#777]"
            />
            <div className="ml-1 flex w-[29px] flex-col items-center pt-1">
              <svg viewBox="0 0 12 18" className="h-[18px] w-3 shrink-0">
                <path d="M0 9h12v9H0z" fill="#fff" stroke="#666" />
                <path d="M2 16h8l-4-5z" />
                <path d="M0 0h12v9H0z" />
                <path d="M3 5h6" stroke="#fff" strokeWidth="2" />
              </svg>
              <svg viewBox="0 0 22 22" className="mt-2.5 size-[22px] shrink-0">
                <path d="M3 5l9-4 9 3v12l-8 6-9-7z" fill="#222" />
                <path d="M4 6l9-4M8 8l9-5M4 11l9 4 8-6" stroke="#cfc79a" strokeWidth="2" fill="none" />
                <circle cx="6" cy="16" r="5.500" fill="#fff" stroke="#111" />
                <path d="M3 16h6M6 13v6" stroke="#000" strokeWidth="1.500" />
              </svg>
              <Diagonal className="mt-1.5 size-[26px] shrink-0" />
            </div>
          </div>

          <div className="flex h-[31px] shrink-0 items-end pr-[5px]">
            <button type="button" className="h-[23px] w-[51px] border-r-2 border-t border-r-[#7b7b7b] border-t-white pb-1 pr-3">
              선택
            </button>
            <button type="button" className="h-[21px] w-[46px] border-r-2 border-t border-r-[#7b7b7b] border-t-white pb-0.5 pr-3">
              편집
            </button>
            <svg viewBox="0 0 20 20" className="mb-1 ml-auto size-5">
              <path d="M1 19l2-5 8-8 3 3-8 8z" fill="#ddd" stroke="#333" />
              <path d="M1 19l2-5 4-3 2 2-4 4z" fill="#e2b040" />
              <path d="M9 5l6 6 2-3 2-4-3-3-4 2z" fill="#3c3c3c" />
            </svg>
          </div>
          <NavRow id="library" value="색상" />
          <div className="flex min-h-0 flex-1 bg-white pr-px">
            <div className="grid flex-1 grid-cols-[62px_62px_62px] content-start gap-0.5 overflow-hidden pl-[3px] pt-0.5">
              {swatches.map((color) => (
                <button
                  key={color}
                  type="button"
                  aria-label={color}
                  className="h-[62px] border border-[#9a9a9a] bg-white p-px"
                >
                  <span className="block size-full" style={{ backgroundColor: color }} />
                </button>
              ))}
            </div>
            <div className="flex flex-col justify-between bg-[#f0f0f0]">
              <ScrollColumn />
              <Chevron down />
            </div>
          </div>

          <div className="mt-[3px] h-0.5 shrink-0 bg-[#808080]" />
          <div className="mt-1 h-[23px] shrink-0 border-y border-[#a0a0a0] bg-[#e4e4e4] pl-1 leading-5">선택</div>
          <NavRow id="category" value="재질" underline />
          <div className="flex h-[82px] shrink-0 overflow-hidden bg-white pr-px">
            <div className="grid flex-1 grid-cols-[62px_62px_62px] content-start gap-0.5 pl-[3px] pt-0.5">
              {folders.map((name, i) => (
                <button key={i} type="button" className="relative h-[62px] border border-[#9a9a9a] bg-white text-left">
                  <Folder />
                  {name && <span className="absolute bottom-0.5 left-0.5 bg-white px-px leading-4">{name}</span>}
                </button>
              ))}
            </div>
            <ScrollColumn />
          </div>
        </div>

        <div className="flex w-[21px] flex-col justify-between border-l border-white pt-[3px]">
          <ScrollColumn />
          <Chevron down />
        </div>
      </div>
    </aside>
  );
}

function StatusBar() {
  return (
    <footer className="flex h-[26px] shrink-0 items-center overflow-hidden border-t border-white bg-[#f0f0f0] pl-[7px] pt-1 text-[17px] leading-5">
      <svg viewBox="0 0 18 18" className="size-[18px]">
        <circle cx="9" cy="9" r="8" fill="none" stroke="#999" strokeWidth="1.500" />
        <path d="M9 16Q2 7 9 3q7 4 0 13z" fill="#999" />
      </svg>
      <svg viewBox="0 0 18 18" className="ml-[17px] size-[18px]">
        <circle cx="9" cy="9" r="8" fill="none" stroke="#000" strokeWidth="1.800" />
        <circle cx="9" cy="4.500" r="1.500" />
        <path d="M6.500 7h5v4H10.500v4h-3v-4h-1z" />
      </svg>
      <svg viewBox="0 0 18 18" className="ml-[17px] size-[18px]">
        <circle cx="9" cy="9" r="8" fill="none" stroke="#999" strokeWidth="1.500" />
        <circle cx="9" cy="6.500" r="3.500" fill="#999" />
        <path d="M3 15q0-5 6-5t6 5q-6 4-12 0z" fill="#999" />
      </svg>
      <div className="ml-3 h-4 w-px bg-[#8c8c8c]" />
      <p className="ml-[11px] flex-1">오프셋을 정의할 점을 선택하거나 값을 입력하십시오. Alt = 겹침 허용.</p>
      <div className="h-4 w-px bg-[#8c8c8c]" />
      <label htmlFor="distance" className="ml-[10px] w-[42px]">
        거리
      </label>
      <input
        id="distance"
        defaultValue="1"
        className="mr-[5px] h-[23px] w-[250px] self-end border border-b-0 border-[#a3b8cc] bg-[#ffffe1] pl-1 text-base"
      />
    </footer>
  );
}

export default function App() {
  return (
    <div className="flex h-screen flex-col bg-black py-[42px] font-['Noto_Sans_CJK_KR',sans-serif] text-black">
      <nav className="flex h-[26px] shrink-0 items-center gap-[13px] bg-white pl-[7px] pt-0.5 text-base">
        {menus.map((m) => (
          <button key={m} type="button" className="leading-5">
            {m}
          </button>
        ))}
      </nav>
      <TopToolbar />
      <div className="flex min-h-0 flex-1">
        <Palette />
        <Viewport />
        <Tray />
      </div>
      <StatusBar />
    </div>
  );
}
